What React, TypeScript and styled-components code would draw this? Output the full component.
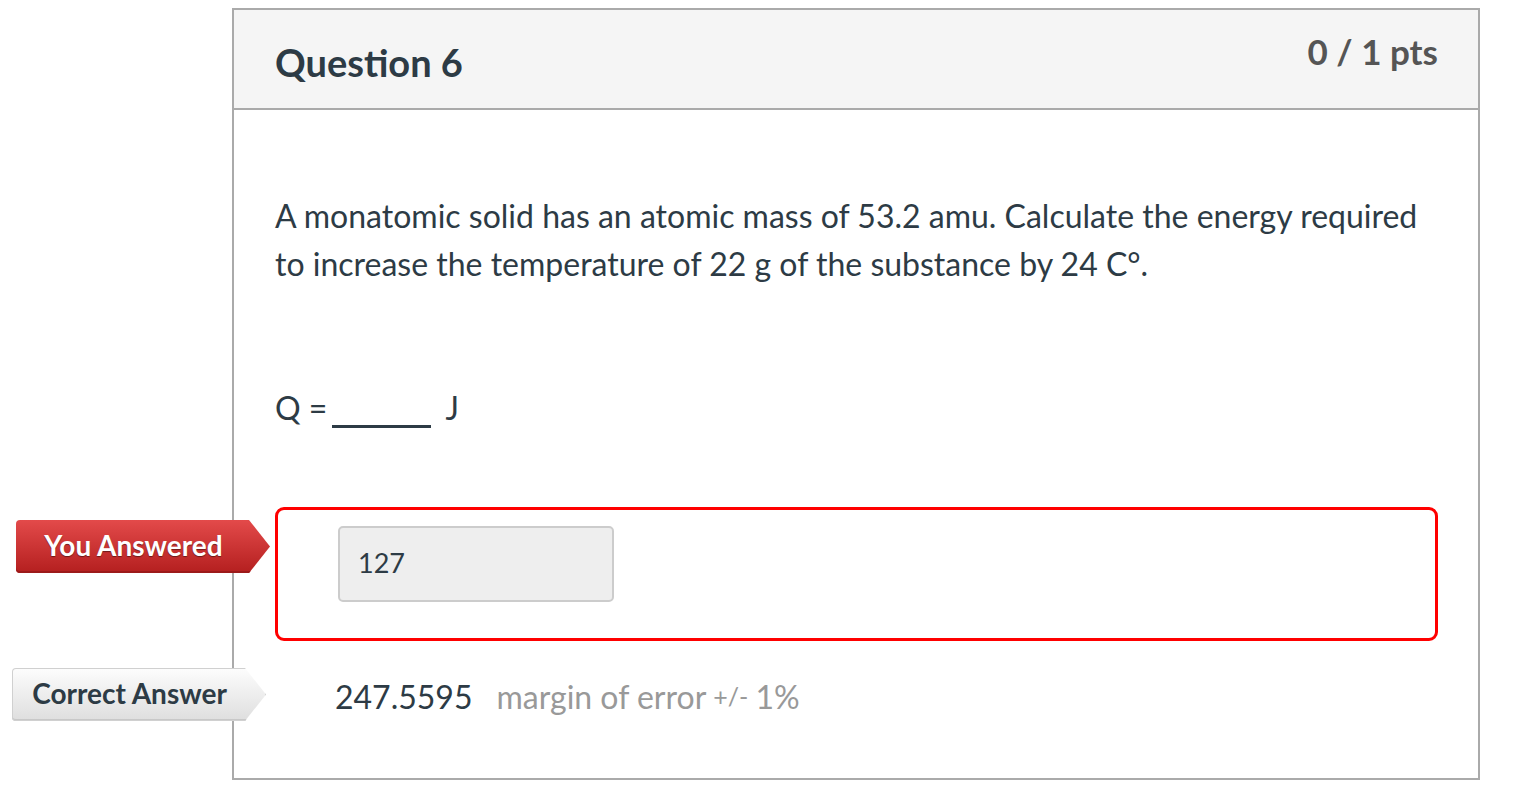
import React from "react";
import styled, { createGlobalStyle } from "styled-components";

const Global = createGlobalStyle`
  html, body { margin: 0; padding: 0; background: #fff; }
  body { font-family: Lato, "Open Sans", sans-serif; color: #2d3b45; }
`;

const Page = styled.div`
  padding: 8px 0 0 232px;
`;

const Card = styled.div`
  width: 1248px;
  box-sizing: border-box;
  border: 2px solid #aaa;
  background: #fff;
`;

const Header = styled.div`
  height: 98px;
  background: #f5f5f5;
  border-bottom: 2px solid #aaa;
  display: flex;
  justify-content: space-between;
  align-items: flex-start;
  padding: 0 40px 0 41px;
`;

const Title = styled.h2`
  margin: 33px 0 0;
  font-size: 38px;
  line-height: 38px;
  font-weight: 700;
  color: #2d3b45;
`;

const Points = styled.div`
  margin-top: 24px;
  font-size: 35px;
  line-height: 35px;
  font-weight: 700;
  color: #555;
`;

const Body = styled.div`
  padding: 82px 40px 58px 41px;
`;

const Text = styled.p<{ $gap: number }>`
  margin: 0 0 ${(p) => p.$gap}px;
  font-size: 32px;
  line-height: 48px;
`;

const Blank = styled.span`
  display: inline-block;
  width: 99px;
  height: 36px;
  vertical-align: -8px;
  border-bottom: 3px solid #2d3b45;
  margin: 0 14px 0 5px;
`;

const AnswerRow = styled.div`
  position: relative;
`;

const WrongBox = styled.div`
  border: 3px solid #f00;
  border-radius: 9px;
  padding: 16px 60px 36px;
`;

const AnswerInput = styled.div`
  width: 276px;
  height: 76px;
  box-sizing: border-box;
  background: #eee;
  border: 2px solid #ccc;
  border-radius: 5px;
  padding: 0 18px 3px;
  display: flex;
  align-items: center;
  font-size: 27px;
  color: #2d3b45;
`;

const Tag = styled.div<{ $variant: "wrong" | "correct"; $left: number; $top: number }>`
  position: absolute;
  left: ${(p) => p.$left}px;
  top: ${(p) => p.$top}px;
  width: 254px;
  height: 53px;
  box-sizing: border-box;
  padding: 0 21px 3px 2px;
  display: flex;
  align-items: center;
  justify-content: center;
  font-size: 28px;
  font-weight: 700;
  border-radius: 4px 0 0 4px;
  clip-path: polygon(0 0, calc(100% - 21px) 0, 100% 50%, calc(100% - 21px) 100%, 0 100%);
  ${(p) =>
    p.$variant === "wrong"
      ? `
    background: linear-gradient(#e34a4a, #b41f1f);
    color: #fff;
    text-shadow: 0 1px 1px rgba(0,0,0,0.45);
    box-shadow: inset 0 -2px 0 #9c1a1a;
  `
      : `
    background: linear-gradient(#fdfdfd, #dedede);
    color: #2d3b45;
    box-shadow: inset 0 0 0 1px #d0d0d0, inset 0 -2px 0 #c8c8c8;
  `}
`;

const CorrectRow = styled.div`
  position: relative;
  margin-top: 31px;
  padding-left: 60px;
  height: 48px;
  display: flex;
  align-items: center;
  white-space: nowrap;
`;

const CorrectValue = styled.span`
  font-size: 32px;
  color: #2d3b45;
  margin-right: 24px;
`;

const Margin = styled.span<{ $small?: boolean }>`
  font-size: ${(p) => (p.$small ? 25 : 32)}px;
  color: #999;
  margin-right: 7px;
`;

export default function App() {
  return (
    <Page>
      <Global />
      <Card>
        <Header>
          <Title>Question 6</Title>
          <Points>0 / 1 pts</Points>
        </Header>
        <Body>
          <Text $gap={96}>
            A monatomic solid has an atomic mass of 53.2 amu. Calculate the energy required to
            increase the temperature of 22 g of the substance by 24 C°.
          </Text>
          <Text $gap={75}>
            Q =<Blank />J
          </Text>
          <AnswerRow>
            <Tag $variant="wrong" $left={-259} $top={13}>You Answered</Tag>
            <WrongBox>
              <AnswerInput>127</AnswerInput>
            </WrongBox>
          </AnswerRow>
          <CorrectRow>
            <Tag $variant="correct" $left={-263} $top={-4}>Correct Answer</Tag>
            <CorrectValue>247.5595</CorrectValue>
            <Margin>margin of error</Margin>
            <Margin $small>+/-</Margin>
            <Margin>1%</Margin>
          </CorrectRow>
        </Body>
      </Card>
    </Page>
  );
}
